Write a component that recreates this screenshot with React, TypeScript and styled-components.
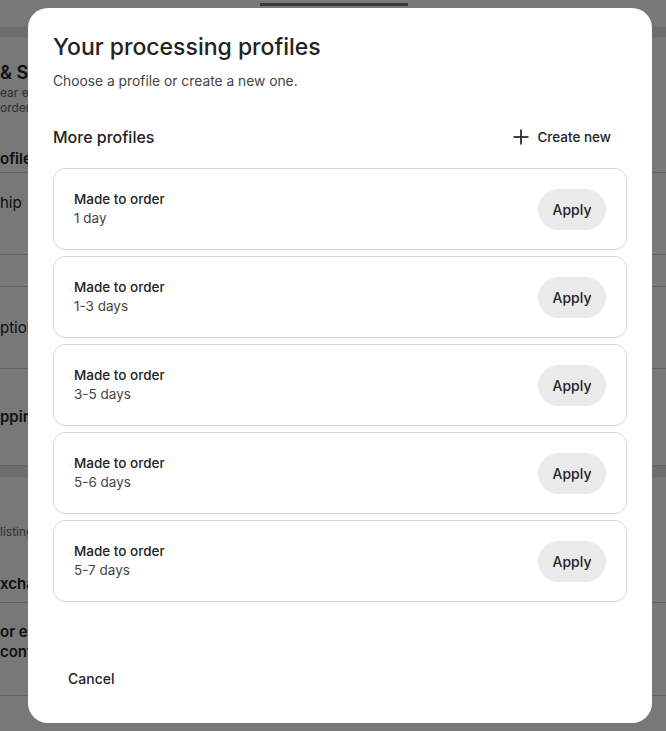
import React from 'react';
import styled, { createGlobalStyle } from 'styled-components';

const GlobalStyle = createGlobalStyle`
    html, body {
        margin: 0;
        padding: 0;
        background: #ffffff;
        font-family: Inter, "Noto Sans", "Liberation Sans", sans-serif;
        color: #222222;
        overflow: hidden;
    }
    * {
        box-sizing: border-box;
    }
`;

/* page behind the dialog */
const Page = styled.div`
    width: 666px;
    height: 731px;
    overflow: hidden;
    background: #ffffff;
`;

const TopBar = styled.div`
    height: 27px;
    padding: 3px 0 0 260px;
`;

const TabLine = styled.div`
    width: 148px;
    height: 3px;
    background: #777777;
`;

const Band = styled.div<{ $h: number }>`
    height: ${(p) => p.$h}px;
    background: #e8e8e8;
`;

const Heading = styled.div`
    padding-top: 24px;
    font-size: 18px;
    font-weight: 600;
    line-height: 24px;
    white-space: nowrap;
`;

const Hint = styled.div`
    font-size: 12px;
    line-height: 15px;
    color: #666666;
    white-space: nowrap;
`;

const Row = styled.div<{ $h: number; $bold?: boolean; $top?: number }>`
    height: ${(p) => p.$h}px;
    display: flex;
    flex-direction: column;
    justify-content: ${(p) => (p.$top !== undefined ? 'flex-start' : 'center')};
    padding-top: ${(p) => p.$top ?? 0}px;
    border-bottom: 1px solid #d0d0d0;
    font-size: 15px;
    line-height: 20px;
    font-weight: ${(p) => (p.$bold ? 600 : 400)};
    white-space: nowrap;
`;

const PlainBlock = styled.div<{ $h: number }>`
    height: ${(p) => p.$h}px;
    display: flex;
    flex-direction: column;
    justify-content: flex-end;
    white-space: nowrap;
`;

const BoldLine = styled.div`
    font-size: 15px;
    font-weight: 600;
    line-height: 20px;
`;

/* dialog */
const Backdrop = styled.div`
    position: fixed;
    inset: 0;
    background: rgba(0, 0, 0, 0.53);
    padding: 8px 14px 8px 28px;
    display: flex;
`;

const Modal = styled.div`
    flex: 1;
    background: #ffffff;
    border-radius: 20px;
    padding: 24px 25px 25px 25px;
    display: flex;
    flex-direction: column;
`;

const Title = styled.h1`
    margin: 0;
    font-size: 23px;
    font-weight: 500;
    line-height: 30px;
    color: #222222;
`;

const Subtitle = styled.p`
    margin: 9px 0 0 0;
    font-size: 13.8px;
    line-height: 20px;
    color: #444444;
`;

const SectionRow = styled.div`
    margin-top: 28px;
    height: 36px;
    display: flex;
    align-items: center;
    justify-content: space-between;
`;

const SectionTitle = styled.h2`
    margin: 0;
    font-size: 16px;
    font-weight: 500;
    color: #222222;
`;

const CreateButton = styled.button`
    height: 36px;
    padding: 0 16px 0 0;
    border: none;
    background: transparent;
    display: flex;
    align-items: center;
    gap: 8px;
    font-family: inherit;
    font-size: 13.5px;
    font-weight: 500;
    color: #222222;
`;

const List = styled.div`
    margin-top: 13px;
    display: flex;
    flex-direction: column;
    gap: 6px;
`;

const Card = styled.div`
    height: 82px;
    border: 1px solid #d6d6d6;
    border-radius: 12px;
    padding: 0 20px;
    display: flex;
    align-items: center;
    justify-content: space-between;
`;

const CardText = styled.div`
    display: flex;
    flex-direction: column;
    font-size: 13.5px;
    line-height: 19px;
`;

const CardName = styled.span`
    font-weight: 500;
    color: #222222;
`;

const CardTime = styled.span`
    color: #444444;
`;

const ApplyButton = styled.button`
    height: 41px;
    width: 68px;
    border: none;
    border-radius: 21px;
    background: #eaeaea;
    font-family: inherit;
    font-size: 14px;
    font-weight: 500;
    color: #222222;
`;

const Footer = styled.div`
    margin-top: auto;
    display: flex;
`;

const CancelButton = styled.button`
    height: 40px;
    padding: 0 15px;
    border: none;
    background: transparent;
    font-family: inherit;
    font-size: 14px;
    font-weight: 500;
    color: #222222;
`;

const PlusIcon = () => (
    <svg width="16" height="16" viewBox="0 0 16 16" fill="none" stroke="#222" strokeWidth="1.7">
        <line x1="8" y1="0.5" x2="8" y2="15.5" />
        <line x1="0.5" y1="8" x2="15.5" y2="8" />
    </svg>
);

const profiles = ['1 day', '1-3 days', '3-5 days', '5-6 days', '5-7 days'];

function App() {
    return (
        <>
            <GlobalStyle />
            <Page>
                <TopBar>
                    <TabLine />
                </TopBar>
                <Band $h={10} />
                <Heading>&amp; Sh</Heading>
                <Hint>ear ex</Hint>
                <Hint>order</Hint>
                <Row $h={58} $bold $top={34}>ofile</Row>
                <Row $h={82} $top={20}>hip</Row>
                <Row $h={32} />
                <Row $h={82}>ption</Row>
                <Row $h={97} $bold>ppin</Row>
                <Band $h={11} />
                <PlainBlock $h={62}>
                    <Hint>listing</Hint>
                </PlainBlock>
                <PlainBlock $h={55}>
                    <BoldLine>xcha</BoldLine>
                </PlainBlock>
                <Row $h={9} />
                <PlainBlock $h={59}>
                    <BoldLine>or ex</BoldLine>
                    <BoldLine>cont</BoldLine>
                </PlainBlock>
                <Row $h={34} />
            </Page>
            <Backdrop>
                <Modal>
                    <Title>Your processing profiles</Title>
                    <Subtitle>Choose a profile or create a new one.</Subtitle>
                    <SectionRow>
                        <SectionTitle>More profiles</SectionTitle>
                        <CreateButton>
                            <PlusIcon />
                            Create new
                        </CreateButton>
                    </SectionRow>
                    <List>
                        {profiles.map((p) => (
                            <Card key={p}>
                                <CardText>
                                    <CardName>Made to order</CardName>
                                    <CardTime>{p}</CardTime>
                                </CardText>
                                <ApplyButton>Apply</ApplyButton>
                            </Card>
                        ))}
                    </List>
                    <Footer>
                        <CancelButton>Cancel</CancelButton>
                    </Footer>
                </Modal>
            </Backdrop>
        </>
    );
}

export default App;
